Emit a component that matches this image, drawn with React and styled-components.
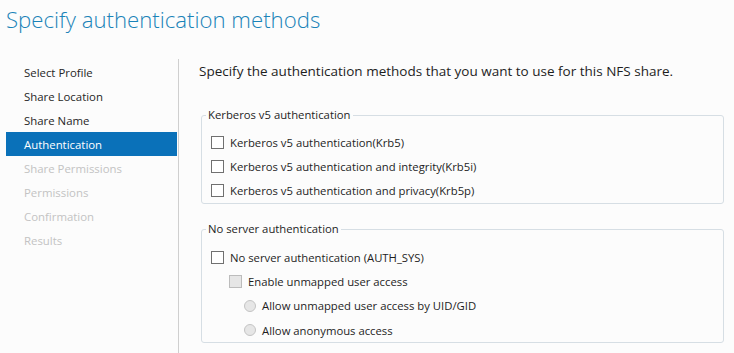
import React from "react";
import styled, { createGlobalStyle } from "styled-components";

const Global = createGlobalStyle`
  html, body { margin: 0; padding: 0; background: #fcfcfc; }
  body { font-family: "Open Sans", "Noto Sans", sans-serif; color: #1e1e1e; }
  * { box-sizing: border-box; }
`;

const Page = styled.div`
  width: 734px;
  height: 353px;
  display: flex;
  flex-direction: column;
  overflow: hidden;
  background: #fcfcfc;
`;

const Header = styled.header`
  height: 59px;
  padding: 5px 0 0 6px;
`;

const Title = styled.h1`
  margin: 0;
  font-family: "Open Sans", sans-serif;
  font-weight: 300;
  font-size: 22.2px;
  line-height: 30px;
  color: #1a83b8;
`;

const Body = styled.div`
  flex: 1;
  display: flex;
  min-height: 0;
`;

const Nav = styled.nav`
  width: 179px;
  flex: none;
  padding: 1px 1px 0 6px;
  border-right: 1px solid #cfcfcf;
  display: flex;
  flex-direction: column;
`;

const NavItem = styled.div`
  height: 24px;
  display: flex;
  align-items: center;
  padding-left: 18px;
  font-size: 11.4px;
  background: ${(p) => (p.$active ? "#0a71b9" : "transparent")};
  color: ${(p) => (p.$active ? "#ffffff" : p.$disabled ? "#c3c3c3" : "#262626")};
`;

const Main = styled.main`
  flex: 1;
  padding: 2px 10px 0 20px;
  display: flex;
  flex-direction: column;
`;

const Intro = styled.p`
  margin: 0;
  font-size: 13.5px;
  line-height: 20px;
  color: #1e1e1e;
`;

const Group = styled.fieldset`
  margin: ${(p) => p.$mt}px 0 0 2px;
  padding: 0 0 0 9px;
  border: 1px solid #d6dee4;
  border-radius: 3px;
  min-width: 0;
`;

const Legend = styled.legend`
  margin-left: -5px;
  padding: 0 2px;
  font-size: 11.3px;
  line-height: 16px;
  color: #1e1e1e;
`;

const Rows = styled.div`
  display: flex;
  flex-direction: column;
  padding: ${(p) => p.$pt}px 0 ${(p) => p.$pb}px 0;
`;

const Row = styled.label`
  height: ${(p) => p.$h || 24}px;
  display: flex;
  align-items: center;
  gap: 6px;
  padding-left: ${(p) => p.$indent || 0}px;
  font-size: 11.3px;
  color: #1e1e1e;
`;

const Box = styled.span`
  width: 13px;
  height: 13px;
  flex: none;
  border: 1px solid ${(p) => (p.$disabled ? "#bcbcbc" : "#707070")};
  background: ${(p) => (p.$disabled ? "#e6e6e6" : "#ffffff")};
`;

const Radio = styled.span`
  width: 12px;
  height: 12px;
  flex: none;
  border-radius: 50%;
  border: 1px solid #c4c4c4;
  background: #e6e6e6;
`;

const navItems = [
  { label: "Select Profile" },
  { label: "Share Location" },
  { label: "Share Name" },
  { label: "Authentication", active: true },
  { label: "Share Permissions", disabled: true },
  { label: "Permissions", disabled: true },
  { label: "Confirmation", disabled: true },
  { label: "Results", disabled: true },
];

export default function App() {
  return (
    <>
      <Global />
      <Page>
        <Header>
          <Title>Specify authentication methods</Title>
        </Header>
        <Body>
          <Nav>
            {navItems.map((n) => (
              <NavItem key={n.label} $active={n.active} $disabled={n.disabled}>
                {n.label}
              </NavItem>
            ))}
          </Nav>
          <Main>
            <Intro>Specify the authentication methods that you want to use for this NFS share.</Intro>
            <Group $mt={26}>
              <Legend>Kerberos v5 authentication</Legend>
              <Rows $pt={7} $pb={1}>
                <Row><Box />Kerberos v5 authentication(Krb5)</Row>
                <Row><Box />Kerberos v5 authentication and integrity(Krb5i)</Row>
                <Row><Box />Kerberos v5 authentication and privacy(Krb5p)</Row>
              </Rows>
            </Group>
            <Group $mt={17}>
              <Legend>No server authentication</Legend>
              <Rows $pt={8} $pb={0}>
                <Row><Box />No server authentication (AUTH_SYS)</Row>
                <Row $indent={18}><Box $disabled />Enable unmapped user access</Row>
                <Row $indent={33} $h={25}><Radio />Allow unmapped user access by UID/GID</Row>
                <Row $indent={33} $h={24}><Radio />Allow anonymous access</Row>
              </Rows>
            </Group>
          </Main>
        </Body>
      </Page>
    </>
  );
}
